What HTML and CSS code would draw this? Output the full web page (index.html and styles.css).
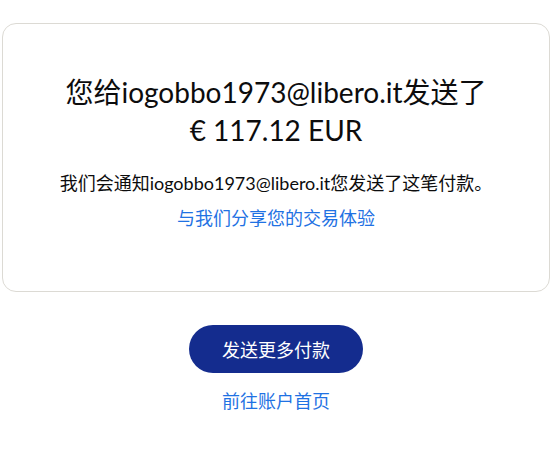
FILE: index.html
```html
<!DOCTYPE html>
<html lang="zh-CN">
<head>
    <meta charset="UTF-8">
    <meta name="viewport" content="width=device-width, initial-scale=1.0">
    <title>付款已发送</title>
    <link rel="stylesheet" href="styles.css">
</head>
<body>
    <!-- Confirmation card -->
    <div class="card">
        <h1 class="headline">您给iogobbo1973@libero.it发送了<br>€ 117.12 EUR</h1>
        <p class="notice">我们会通知iogobbo1973@libero.it您发送了这笔付款。</p>
        <a href="#" class="link">与我们分享您的交易体验</a>
    </div>

    <!-- Actions -->
    <div class="actions">
        <button class="primary-button">发送更多付款</button>
        <a href="#" class="link">前往账户首页</a>
    </div>
</body>
</html>
```

FILE: styles.css
```css
* {
    box-sizing: border-box;
    margin: 0;
    padding: 0;
    font-family: Lato, "Noto Sans CJK SC", sans-serif;
}

body {
    background-color: #ffffff;
    color: #0c0c0d;
    padding: 23px 5px 0 2px;
}

.card {
    border: 1px solid #dcdad4;
    border-radius: 14px;
    padding: 49px 20px 60px;
    text-align: center;
    display: flex;
    flex-direction: column;
    align-items: center;
}

.headline {
    font-size: 28px;
    font-weight: normal;
    line-height: 38px;
    margin-bottom: 21px;
}

.notice {
    font-size: 18px;
    line-height: 27px;
    margin-bottom: 8px;
}

.link {
    font-size: 18px;
    line-height: 26px;
    color: #1f72e3;
    text-decoration: none;
}

.actions {
    display: flex;
    flex-direction: column;
    align-items: center;
    padding-top: 33px;
    gap: 15px;
}

.primary-button {
    height: 48px;
    padding: 0 33px;
    font-size: 18px;
    border: none;
    border-radius: 24px;
    background-color: #142c8e;
    color: #ffffff;
    cursor: pointer;
}
```
